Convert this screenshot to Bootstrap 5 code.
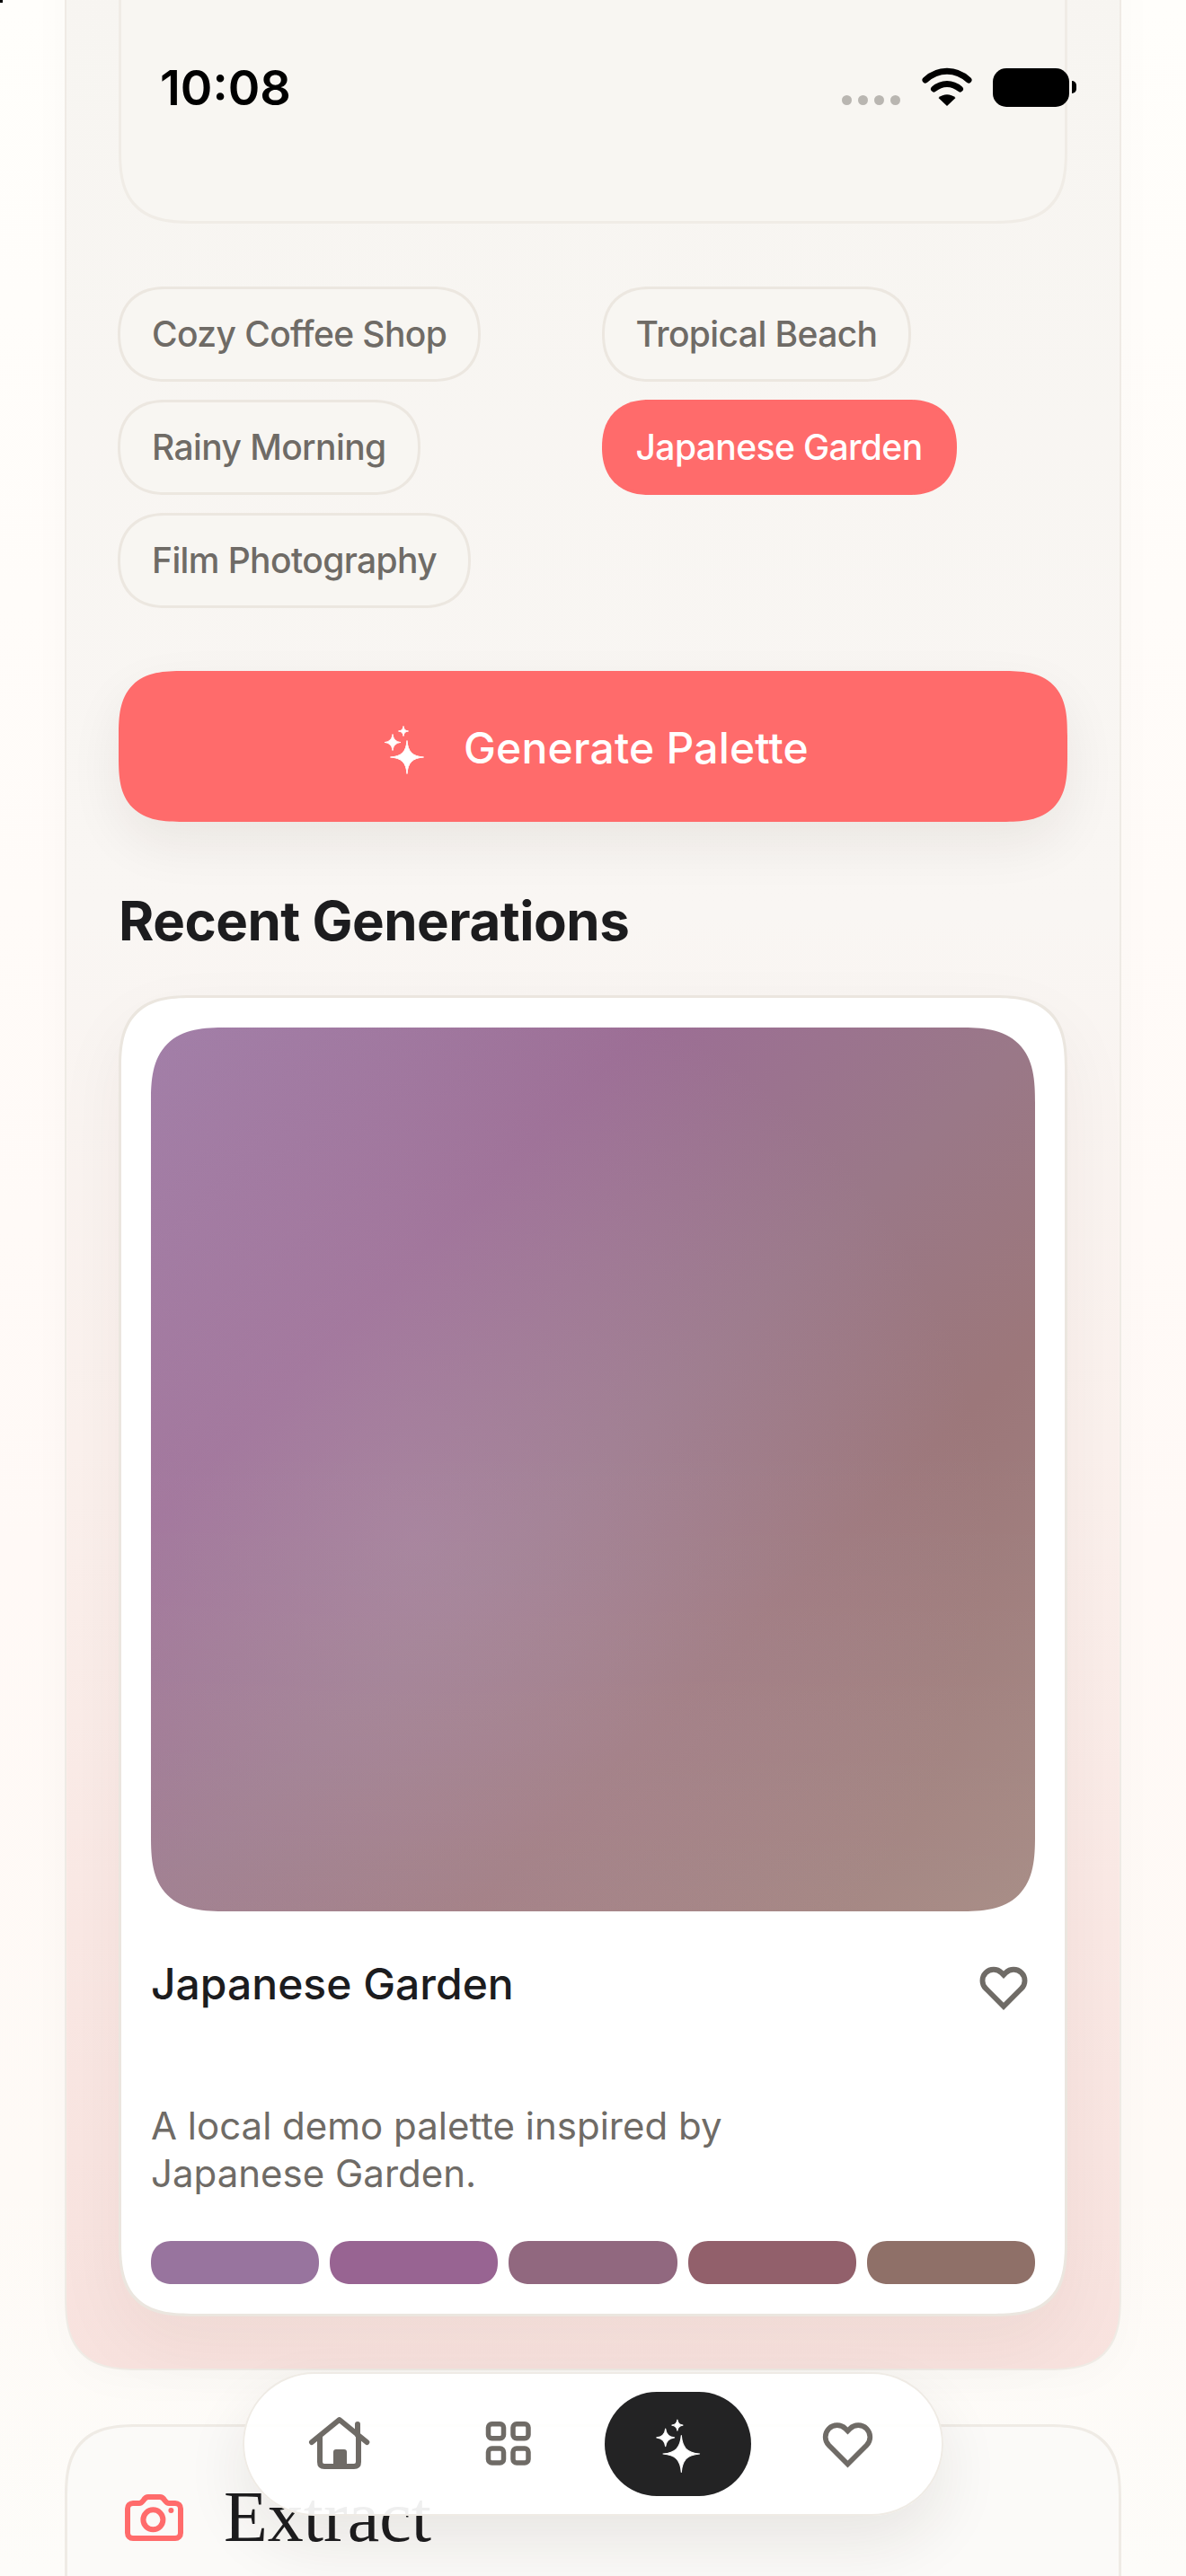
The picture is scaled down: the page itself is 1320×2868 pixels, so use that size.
<!DOCTYPE html>
<html lang="en">
<head>
  <meta charset="UTF-8" />
  <meta name="viewport" content="width=device-width, initial-scale=1.0"/>
  <title>Palette Generator</title>
  <link href="https://cdn.jsdelivr.net/npm/bootstrap@5.3.0/dist/css/bootstrap.min.css" rel="stylesheet"/>
  <style>
    html, body {
      height: 2868px;
      overflow: hidden;
    }
    body {
      position: relative;
      font-family: Inter, "Liberation Sans", sans-serif;
      color: #1c1c1e;
      background: linear-gradient(180deg, #fffefb 0%, #fffbf8 35%, #fff9f6 60%, #fefaf6 85%, #fdfcf9 100%);
    }
    .origin-tick {
      position: absolute;
      left: 0;
      top: 0;
      width: 3px;
      height: 3px;
      background: #000;
      z-index: 6;
    }
    /* status bar sits over the scrolled content */
    .status-row {
      position: absolute;
      top: 0;
      left: 0;
      right: 0;
      height: 130px;
      z-index: 5;
    }
    .status-time {
      position: absolute;
      left: 178px;
      top: 66px;
      font-size: 54px;
      line-height: 64px;
      font-weight: 600;
      color: #000;
    }
    .status-icons {
      position: absolute;
      left: 937px;
      top: 75px;
    }
    .signal-dots {
      width: 65px;
      height: 42px;
      margin-right: 24px;
      column-gap: 7px;
    }
    .signal-dot {
      width: 11px;
      height: 11px;
      border-radius: 50%;
      background: #b9b6b1;
    }
    .battery-body {
      width: 85px;
      height: 43px;
      margin-left: 23px;
      border-radius: 15px;
      background: #000;
    }
    .battery-cap {
      width: 5px;
      height: 14px;
      margin-left: 3px;
      border-radius: 0 7px 7px 0;
      background: #000;
    }
    /* continuous corners where the engine has them */
    .page-panel, .prompt-box, .make-btn, .result-card, .result-art, .extract-panel {
      corner-shape: superellipse(1.5);
    }
    .chip-btn, .swatch {
      corner-shape: superellipse(1.2);
    }
    .page-panel {
      margin: -60px 72px 0;
      padding: 0 58px 58px;
      border: 2px solid #efebe5;
      border-top: 0;
      border-radius: 0 0 84px 84px;
      background: linear-gradient(180deg, #f7f5f1 0%, #f9f6f3 40%, #fbf1ed 62%, #fae8e4 82%, #f8e2de 100%);
      box-shadow: 0 10px 50px rgba(60, 40, 30, .025);
    }
    .prompt-box {
      height: 309px;
      border: 3px solid #f0ece6;
      border-top: 0;
      border-radius: 0 0 84px 84px;
      background: #f8f6f2;
    }
    .chip-grid {
      display: grid;
      grid-template-columns: 1fr 1fr;
      column-gap: 20px;
      row-gap: 20px;
      justify-items: start;
      margin: 70px 0 0 -1px;
    }
    .chip-btn {
      height: 106px;
      padding: 0 35px;
      font-size: 39px;
      letter-spacing: -.6px;
      font-weight: 500;
      color: #6f6b66;
      background: #f8f6f2;
      border: 3px solid #ece7e0;
      border-radius: 53px;
      white-space: nowrap;
    }
    .chip-btn.chip-active {
      color: #fff;
      background: #ff6b6b;
      border-color: #ff6b6b;
    }
    .make-btn {
      height: 168px;
      margin-top: 70px;
      padding: 4px 0 0;
      font-size: 48px;
      letter-spacing: .2px;
      font-weight: 500;
      color: #fff;
      background: #ff6b6b;
      border: 0;
      border-radius: 72px;
      box-shadow: 0 24px 60px rgba(40, 30, 20, .07);
      gap: 36px;
    }
    .make-btn svg {
      width: 60px;
      height: 60px;
    }
    .spark-glyph {
      fill: currentColor;
      stroke: currentColor;
      stroke-width: 1;
      stroke-linejoin: round;
    }
    .section-title {
      margin: 74px 0 47px;
      font-size: 60px;
      letter-spacing: -.5px;
      line-height: 72px;
      font-weight: 700;
      color: #1c1c1e;
    }
    .result-card {
      border: 3px solid #ebe6df;
      border-radius: 84px;
      background: #fff;
      padding: 33px;
      box-shadow: 0 30px 80px rgba(60, 30, 20, .05);
    }
    .result-art {
      height: 984px;
      border-radius: 84px;
      background:
        linear-gradient(180deg, rgba(255, 255, 255, 0) 45%, rgba(255, 255, 255, .05) 100%),
        radial-gradient(ellipse 65% 65% at 30% 58%, rgba(190, 160, 190, .36), rgba(190, 160, 190, 0) 100%),
        linear-gradient(135deg, #a27fa8 0%, #9c6e95 28%, #9a7888 50%, #9c777a 68%, #a48881 100%);
    }
    .result-head {
      margin-top: 52px;
      height: 160px;
    }
    .result-name {
      margin: 0;
      font-size: 48px;
      line-height: 58px;
      font-weight: 500;
      color: #1c1c1e;
    }
    .result-head svg {
      width: 54px;
      height: 54px;
      margin: 6px 8px 0 0;
      fill: none;
      stroke: #6f6b66;
      stroke-width: 2.600;
    }
    .result-text {
      max-width: 700px;
      margin: 0;
      font-size: 42px;
      line-height: 53px;
      color: #6f6b66;
    }
    .swatch-row {
      margin-top: 49px;
      gap: 12px;
    }
    .swatch {
      flex: 1 1 0;
      height: 48px;
      border-radius: 24px;
    }
    .extract-panel {
      margin: 60px 72px 0;
      padding: 75px 64px;
      height: 400px;
      border: 3px solid #efebe5;
      border-radius: 84px;
      background: #fbfaf8;
      gap: 45px;
    }
    .extract-panel svg {
      width: 65px;
      height: 52px;
      fill: none;
      stroke: #ff6b6b;
      stroke-width: 6;
      stroke-linejoin: round;
    }
    .extract-name {
      margin: 0;
      font-family: "Liberation Serif", serif;
      font-size: 80px;
      line-height: 50px;
      font-weight: 400;
      color: #1c1c1e;
    }
    /* floating tab bar, over the cards */
    .tab-bar {
      position: absolute;
      left: 270px;
      top: 2641px;
      width: 780px;
      height: 160px;
      padding: 0 23px;
      gap: 26px;
      border: 2px solid #efebe5;
      border-radius: 80px;
      background: rgba(255, 255, 255, .93);
      box-shadow: 0 30px 70px rgba(40, 30, 20, .09);
      z-index: 4;
    }
    .tab-item {
      width: 163px;
      height: 116px;
      border-radius: 58px;
      color: #6f6b66;
    }
    .tab-item.tab-on {
      background: #232324;
      color: #fff;
    }
  </style>
</head>
<body>

<div class="origin-tick"></div>

<svg width="0" height="0" class="position-absolute">
  <symbol id="sparkles" viewBox="-3 0 60 60">
    <g class="spark-glyph">
      <path d="M30 21.500 C31 34 36 39 48.500 40 C36 41 31 46 30 58.500 C29 46 24 41 11.500 40 C24 39 29 34 30 21.500Z"/>
      <path d="M14 14.500 C14.600 20 18 23 23 23.500 C18 24 14.600 27 14 32.500 C13.400 27 10 24 5 23.500 C10 23 13.400 20 14 14.500Z"/>
      <path d="M26 5.500 C26.400 9 28 10.600 31.500 11 C28 11.400 26.400 13 26 16.500 C25.600 13 24 11.400 20.500 11 C24 10.600 25.600 9 26 5.500Z"/>
    </g>
  </symbol>
  <symbol id="heart-line" viewBox="0 0 24 24">
    <path d="M20.840 4.610a5.500 5.500 0 0 0-7.780 0L12 5.670l-1.060-1.060a5.500 5.500 0 0 0-7.780 7.780l1.060 1.060L12 21.230l7.780-7.780 1.060-1.060a5.500 5.500 0 0 0 0-7.780z"/>
  </symbol>
</svg>

<div class="status-row">
  <div class="status-time">10:08</div>
  <div class="status-icons d-flex">
    <div class="signal-dots d-flex align-items-end">
      <span class="signal-dot"></span><span class="signal-dot"></span><span class="signal-dot"></span><span class="signal-dot"></span>
    </div>
    <svg width="56" height="44" viewBox="0 0 56 44" fill="none" stroke="#000" stroke-linecap="round" stroke-width="7">
      <path d="M4 14 C18 1 38 1 52 14"/>
      <path d="M13.500 24 C22 16.500 34 16.500 42.500 24"/>
      <path d="M28 43 L18.500 34 C24 29 32 29 37.500 34Z" fill="#000" stroke="none"/>
    </svg>
    <div class="d-flex align-items-center">
      <div class="battery-body"></div>
      <div class="battery-cap"></div>
    </div>
  </div>
</div>

<div class="page-panel">
  <div class="prompt-box"></div>

  <div class="chip-grid">
    <button class="btn chip-btn">Cozy Coffee Shop</button>
    <button class="btn chip-btn">Tropical Beach</button>
    <button class="btn chip-btn">Rainy Morning</button>
    <button class="btn chip-btn chip-active">Japanese Garden</button>
    <button class="btn chip-btn">Film Photography</button>
  </div>

  <button class="btn make-btn w-100 d-flex align-items-center justify-content-center">
    <svg><use href="#sparkles"/></svg>
    Generate Palette
  </button>

  <h2 class="section-title">Recent Generations</h2>

  <div class="card result-card">
    <div class="result-art"></div>
    <div class="result-head d-flex justify-content-between align-items-start">
      <h3 class="result-name">Japanese Garden</h3>
      <svg><use href="#heart-line"/></svg>
    </div>
    <p class="result-text">A local demo palette inspired by Japanese Garden.</p>
    <div class="swatch-row d-flex">
      <div class="swatch" style="background:#98749e"></div>
      <div class="swatch" style="background:#986492"></div>
      <div class="swatch" style="background:#91687f"></div>
      <div class="swatch" style="background:#92606b"></div>
      <div class="swatch" style="background:#8f7068"></div>
    </div>
  </div>
</div>

<div class="extract-panel d-flex align-items-start">
  <svg viewBox="0 0 65 52">
    <path d="M9 10 H16 C18 10 19 9 20.500 7 C22 4.500 23.500 3 26 3 H39 C41.500 3 43 4.500 44.500 7 C46 9 47 10 49 10 H56 C59.500 10 62 12.500 62 16 V43 C62 46.500 59.500 49 56 49 H9 C5.500 49 3 46.500 3 43 V16 C3 12.500 5.500 10 9 10Z"/>
    <circle cx="31.400" cy="28.300" r="11"/>
    <circle cx="51.400" cy="18" r="3" fill="#ff6b6b" stroke="none"/>
  </svg>
  <h2 class="extract-name">Extract</h2>
</div>

<nav class="tab-bar d-flex align-items-center">
  <div class="tab-item d-flex align-items-center justify-content-center">
    <svg width="72" height="64" viewBox="0 0 72 64" fill="none" stroke="currentColor" stroke-width="6" stroke-linecap="round" stroke-linejoin="round">
      <path d="M6 30 L36.700 5 L67.300 30"/>
      <path d="M15 24 V52 Q15 57 20 57 H53 Q58 57 58 52 V24"/>
      <path d="M57 10 V22"/>
      <path d="M31 57 V41 Q31 39 33 39 H42 Q44 39 44 41 V57Z" fill="currentColor" stroke-width="2"/>
    </svg>
  </div>
  <div class="tab-item d-flex align-items-center justify-content-center">
    <svg width="60" height="60" viewBox="0 0 60 60" fill="none" stroke="currentColor" stroke-width="5.500">
      <rect x="7.500" y="7.700" width="17" height="16" rx="4"/>
      <rect x="35" y="7.700" width="17" height="16" rx="4"/>
      <rect x="7.500" y="35" width="17" height="16" rx="4"/>
      <rect x="35" y="35" width="17" height="16" rx="4"/>
    </svg>
  </div>
  <div class="tab-item tab-on d-flex align-items-center justify-content-center">
    <svg width="66" height="66"><use href="#sparkles"/></svg>
  </div>
  <div class="tab-item d-flex align-items-center justify-content-center">
    <svg width="57" height="57" fill="none" stroke="currentColor" stroke-width="2.400"><use href="#heart-line"/></svg>
  </div>
</nav>

<script src="https://cdn.jsdelivr.net/npm/bootstrap@5.3.0/dist/js/bootstrap.bundle.min.js"></script>
</body>
</html>
